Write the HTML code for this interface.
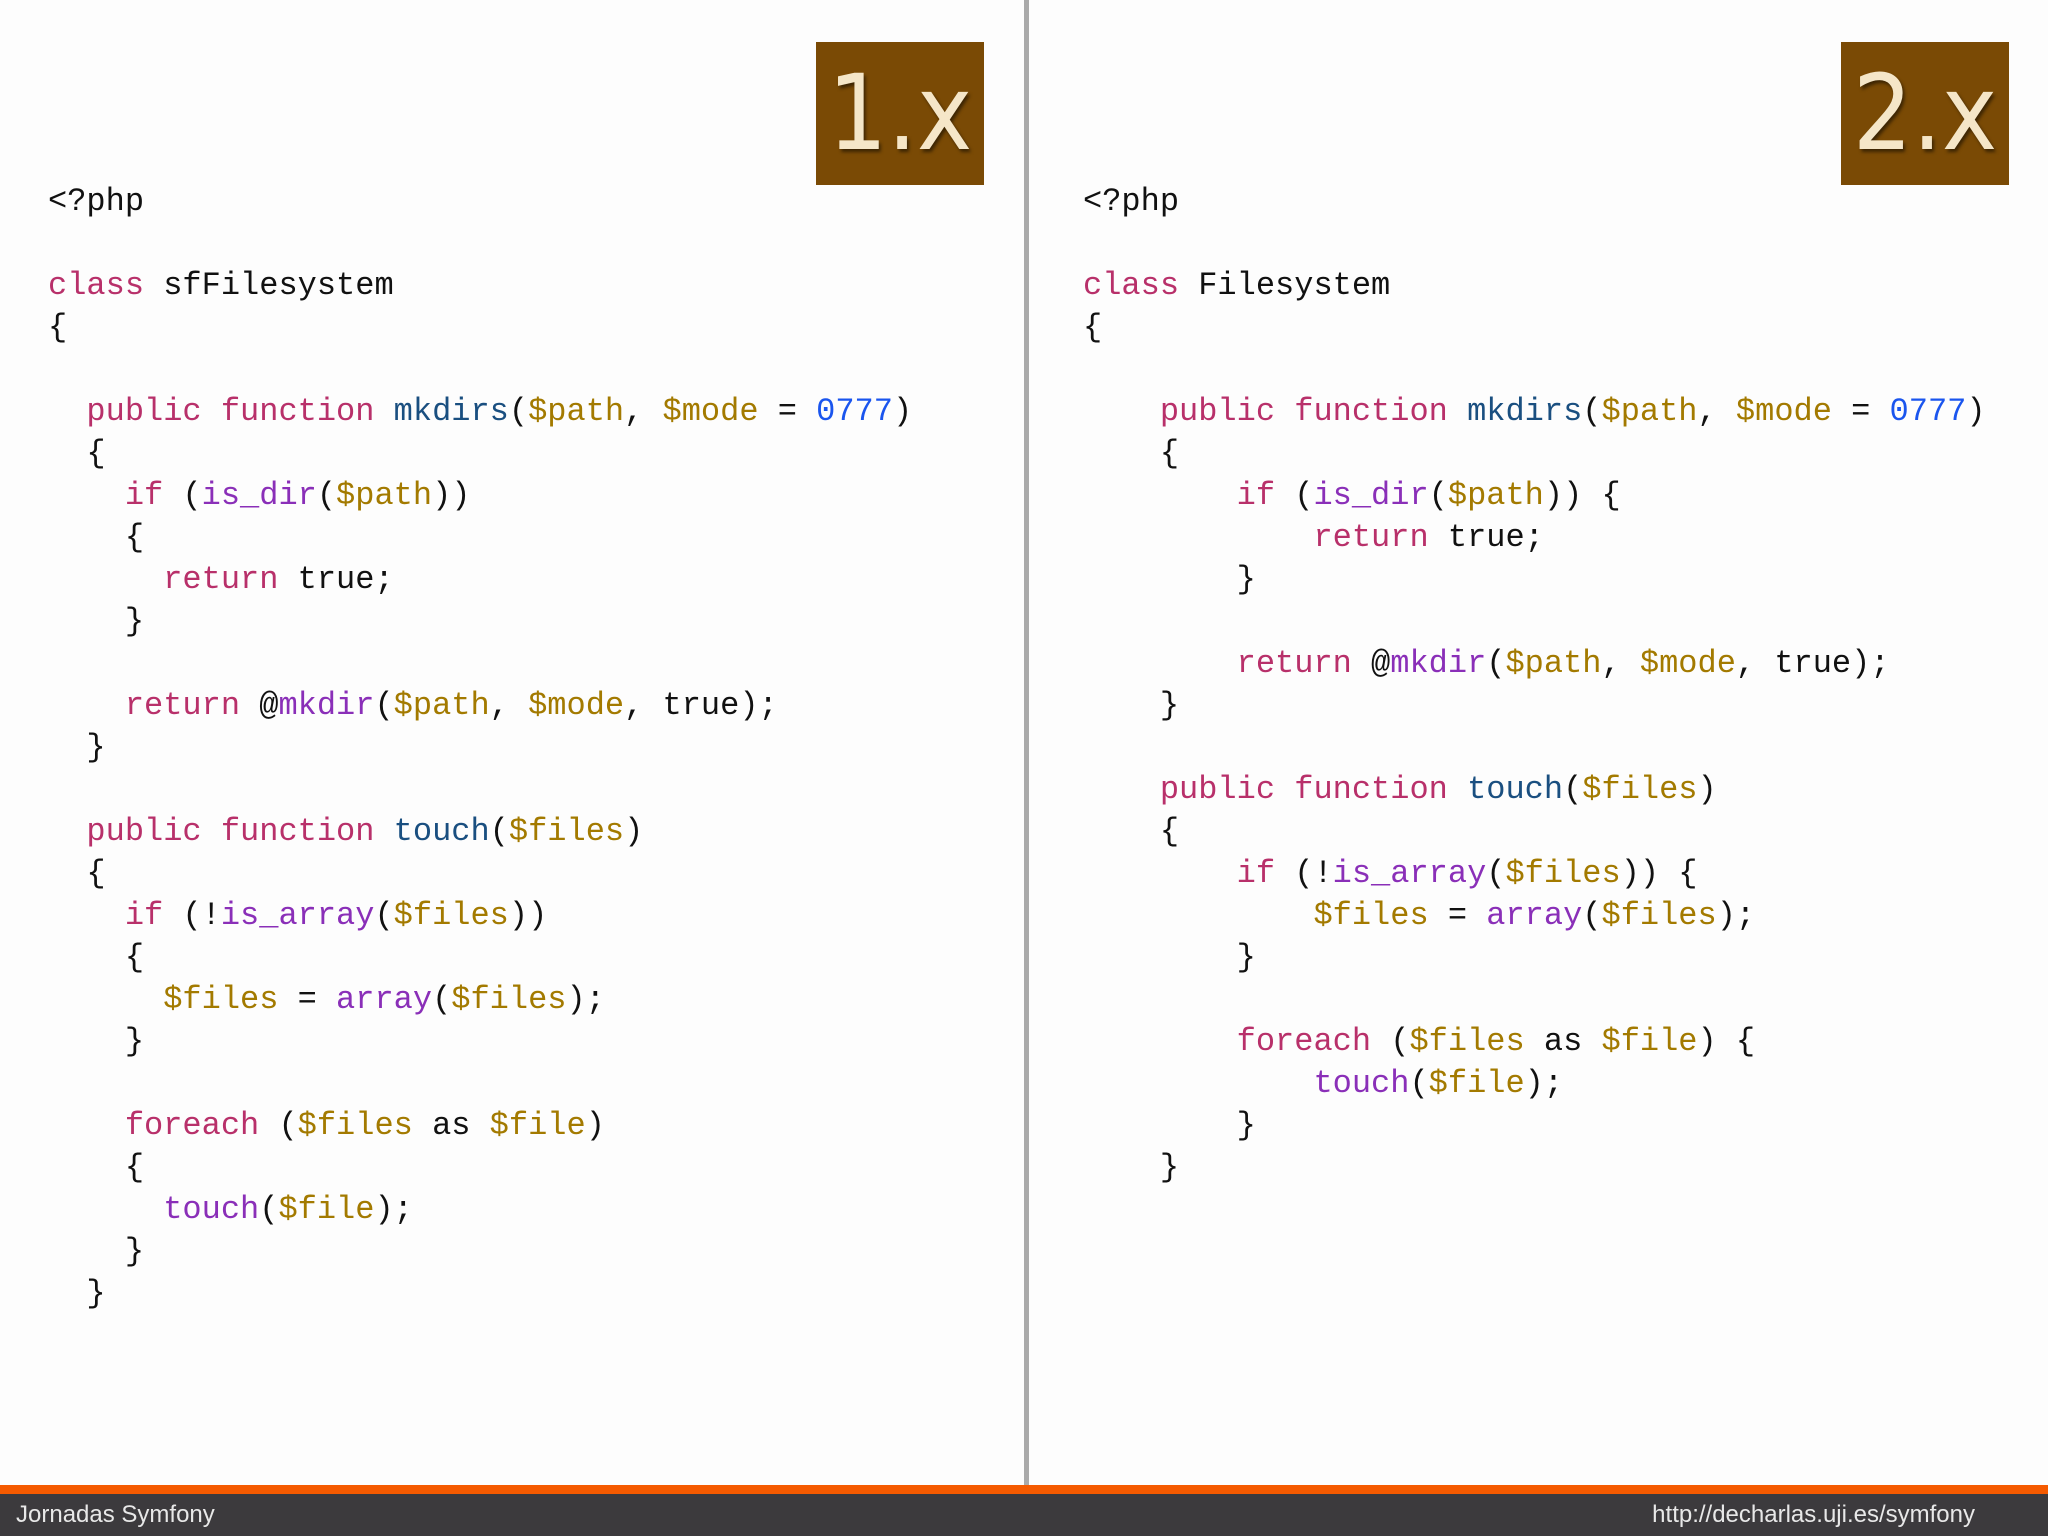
<!DOCTYPE html>
<html><head><meta charset="utf-8"><style>
html,body{margin:0;padding:0;}
body{width:2048px;height:1536px;position:relative;background:#fdfdfd;overflow:hidden;}
pre{position:absolute;top:181px;margin:0;font-family:"Liberation Mono",monospace;font-size:32px;line-height:42px;color:#111;letter-spacing:0;}
.k{color:#b8306a}.f{color:#1a4f80}.p{color:#8a2fb8}.v{color:#a37a00}.n{color:#1a55ee}
.div{position:absolute;left:1024px;top:0;width:5px;height:1486px;background:#aaa;}
.badge{position:absolute;top:42px;width:168px;height:143px;background:#7a4a05;color:#f5e6c8;font-family:"DejaVu Sans Condensed","Liberation Sans Narrow","Liberation Sans",sans-serif;font-size:104px;line-height:143px;text-align:center;text-shadow:2px 3px 3px rgba(0,0,0,.5);}
.or{position:absolute;left:0;top:1485px;width:2048px;height:9px;background:#f55a00;}
.ft{position:absolute;left:0;top:1494px;width:2048px;height:42px;background:#3c3a3d;color:#e8e8e8;font-family:"Liberation Sans",sans-serif;font-size:24px;line-height:42px;}
</style></head><body>
<div class="badge" style="left:816px">1.x</div>
<div class="badge" style="left:1841px">2.x</div>
<div class="div"></div>
<pre style="left:48px">&lt;?php

<span class="k">class</span> sfFilesystem
{

  <span class="k">public function</span> <span class="f">mkdirs</span>(<span class="v">$path</span>, <span class="v">$mode</span> = <span class="n">0777</span>)
  {
    <span class="k">if</span> (<span class="p">is_dir</span>(<span class="v">$path</span>))
    {
      <span class="k">return</span> true;
    }

    <span class="k">return</span> @<span class="p">mkdir</span>(<span class="v">$path</span>, <span class="v">$mode</span>, true);
  }

  <span class="k">public function</span> <span class="f">touch</span>(<span class="v">$files</span>)
  {
    <span class="k">if</span> (!<span class="p">is_array</span>(<span class="v">$files</span>))
    {
      <span class="v">$files</span> = <span class="p">array</span>(<span class="v">$files</span>);
    }

    <span class="k">foreach</span> (<span class="v">$files</span> as <span class="v">$file</span>)
    {
      <span class="p">touch</span>(<span class="v">$file</span>);
    }
  }</pre>
<pre style="left:1083px">&lt;?php

<span class="k">class</span> Filesystem
{

    <span class="k">public function</span> <span class="f">mkdirs</span>(<span class="v">$path</span>, <span class="v">$mode</span> = <span class="n">0777</span>)
    {
        <span class="k">if</span> (<span class="p">is_dir</span>(<span class="v">$path</span>)) {
            <span class="k">return</span> true;
        }

        <span class="k">return</span> @<span class="p">mkdir</span>(<span class="v">$path</span>, <span class="v">$mode</span>, true);
    }

    <span class="k">public function</span> <span class="f">touch</span>(<span class="v">$files</span>)
    {
        <span class="k">if</span> (!<span class="p">is_array</span>(<span class="v">$files</span>)) {
            <span class="v">$files</span> = <span class="p">array</span>(<span class="v">$files</span>);
        }

        <span class="k">foreach</span> (<span class="v">$files</span> as <span class="v">$file</span>) {
            <span class="p">touch</span>(<span class="v">$file</span>);
        }
    }</pre>
<div class="or"></div>
<div class="ft"><span style="position:absolute;left:16px">Jornadas Symfony</span><span style="position:absolute;right:73px">http://decharlas.uji.es/symfony</span></div>
</body></html>
